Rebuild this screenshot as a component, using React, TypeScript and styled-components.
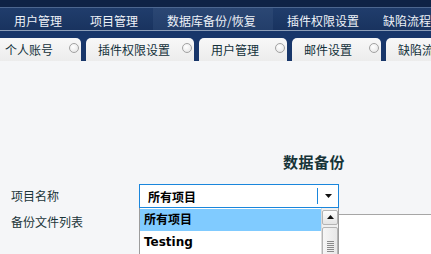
import React from "react";
import styled, { createGlobalStyle } from "styled-components";

const Global = createGlobalStyle`
  html, body {
    margin: 0;
    padding: 0;
    overflow: hidden;
    background: #f5f6f8;
    font-family: "Noto Sans CJK SC", "DejaVu Sans", sans-serif;
  }
`;

const Page = styled.div`
  width: 431px;
  height: 254px;
  overflow: hidden;
  background: #f5f6f8;
`;

const TopStrip = styled.div`
  height: 7px;
  background: #0f2346;
`;

const NavBar = styled.nav`
  height: 22px;
  display: flex;
  align-items: stretch;
  border-top: 1px solid #4d6790;
  border-bottom: 1px solid #8b9db8;
  background: linear-gradient(#203d6c, #19335f);
  white-space: nowrap;
`;

const NavItem = styled.div<{ $w: number; $active?: boolean }>`
  flex: none;
  width: ${(p) => p.$w}px;
  box-sizing: border-box;
  padding: 2px 0 0 14px;
  display: flex;
  align-items: center;
  font-size: 12px;
  color: #eef2f8;
  background: ${(p) => (p.$active ? "linear-gradient(#2b4774, #233e6a)" : "transparent")};
`;

const TabBar = styled.div`
  height: 30px;
  box-sizing: border-box;
  padding-top: 7px;
  background: #18366a;
  overflow: hidden;
`;

const TabStrip = styled.div`
  display: flex;
  gap: 5px;
  margin-left: -7px;
  white-space: nowrap;
`;

const Tab = styled.div<{ $w: number }>`
  flex: none;
  width: ${(p) => p.$w}px;
  height: 23px;
  box-sizing: border-box;
  padding-left: 12px;
  display: flex;
  align-items: center;
  border-radius: 5px 5px 0 0;
  background: linear-gradient(#f8f8f8, #ececec);
  font-size: 12px;
  color: #12303a;
`;

const CloseDot = styled.span`
  margin-left: auto;
  margin-right: 2px;
  align-self: flex-start;
  margin-top: 5px;
  width: 10px;
  height: 10px;
  box-sizing: border-box;
  border-radius: 50%;
  border: 1px solid #a2a2a2;
  background: radial-gradient(circle at 40% 35%, #ffffff, #e2e2e2);
`;

const Content = styled.main`
  padding-top: 91px;
`;

const Heading = styled.h2`
  margin: 0 0 12px 283px;
  height: 20px;
  line-height: 20px;
  font-size: 15px;
  font-weight: 700;
  letter-spacing: 0.5px;
  color: #173438;
`;

const Form = styled.div`
  display: grid;
  grid-template-columns: 139px 200px 1fr;
  row-gap: 6px;
`;

const Label = styled.div`
  padding-left: 11px;
  font-size: 12px;
  line-height: 16px;
  color: #1b3538;
  align-self: center;
`;

const TopLabel = styled(Label)`
  align-self: start;
`;

const SelectWrap = styled.div`
  position: relative;
  z-index: 2;
`;

const SelectBox = styled.div`
  height: 24px;
  box-sizing: border-box;
  border: 1px solid #1a86dc;
  background: #fff;
  display: flex;
  align-items: center;
  padding-left: 8px;
  font-size: 12px;
  font-weight: 700;
  color: #000;
`;

const SelectValue = styled.span`
  flex: 1;
`;

const Divider = styled.span`
  width: 1px;
  height: 16px;
  background: #1a86dc;
`;

const ArrowZone = styled.span`
  width: 20px;
  display: flex;
  justify-content: center;
  align-items: center;
`;

const DropList = styled.div`
  position: absolute;
  left: 0;
  top: 100%;
  width: 200px;
  height: 140px;
  box-sizing: border-box;
  border: 1px solid #9c9c9c;
  border-top: none;
  background: #fff;
  display: flex;
`;

const Options = styled.div`
  flex: 1;
  padding-top: 1px;
`;

const Option = styled.div<{ $selected?: boolean }>`
  height: 22px;
  line-height: 22px;
  padding-left: 4px;
  font-family: "DejaVu Sans", "Noto Sans CJK SC", sans-serif;
  font-size: 12px;
  font-weight: 700;
  color: #000;
  background: ${(p) => (p.$selected ? "#80cbff" : "transparent")};
`;

const ScrollBar = styled.div`
  width: 16px;
  padding: 2px 0 0 0;
  background: #f0f0f0;
  border-left: 1px solid #dcdcdc;
  display: flex;
  flex-direction: column;
  gap: 2px;
`;

const ScrollButton = styled.div`
  height: 15px;
  box-sizing: border-box;
  border: 1px solid #b4b4b4;
  border-radius: 2px;
  background: linear-gradient(#fdfdfd, #e4e4e4);
  display: flex;
  align-items: center;
  justify-content: center;
`;

const Thumb = styled.div`
  flex: 1;
  box-sizing: border-box;
  border: 1px solid #b4b4b4;
  border-radius: 2px;
  background: linear-gradient(90deg, #f6f6f6, #e8e8e8);
  display: flex;
  flex-direction: column;
  align-items: center;
  padding-top: 13px;
  gap: 1px;
`;

const Grip = styled.span`
  width: 7px;
  height: 1px;
  background: #8a8a8a;
`;

const TableArea = styled.div`
  grid-column: 2 / 4;
  height: 60px;
  border-top: 1px solid #a6a6a6;
  background: #fff;
`;

const Tri = ({ up }: { up?: boolean }) => (
  <svg width="7" height="5" viewBox="0 0 7 5">
    <polygon points={up ? "3.5,0 7,4 0,4" : "0,0 7,0 3.5,4"} fill="#111" />
  </svg>
);

export default function App() {
  const nav = [
    { t: "用户管理", w: 76 },
    { t: "项目管理", w: 77 },
    { t: "数据库备份/恢复", w: 120, active: true },
    { t: "插件权限设置", w: 96 },
    { t: "缺陷流程设置", w: 100 },
  ];
  const tabs = [
    { t: "个人账号", w: 88 },
    { t: "插件权限设置", w: 108 },
    { t: "用户管理", w: 88 },
    { t: "邮件设置", w: 89 },
    { t: "缺陷流程设置", w: 108 },
  ];
  return (
    <Page>
      <Global />
      <TopStrip />
      <NavBar>
        {nav.map((n) => (
          <NavItem key={n.t} $w={n.w} $active={n.active}>
            {n.t}
          </NavItem>
        ))}
      </NavBar>
      <TabBar>
        <TabStrip>
          {tabs.map((t) => (
            <Tab key={t.t} $w={t.w}>
              {t.t}
              <CloseDot />
            </Tab>
          ))}
        </TabStrip>
      </TabBar>
      <Content>
        <Heading>数据备份</Heading>
        <Form>
          <Label>项目名称</Label>
          <SelectWrap>
            <SelectBox>
              <SelectValue>所有项目</SelectValue>
              <Divider />
              <ArrowZone>
                <Tri />
              </ArrowZone>
            </SelectBox>
            <DropList>
              <Options>
                <Option $selected>所有项目</Option>
                <Option>Testing</Option>
              </Options>
              <ScrollBar>
                <ScrollButton>
                  <Tri up />
                </ScrollButton>
                <Thumb>
                  <Grip />
                  <Grip />
                  <Grip />
                  <Grip />
                  <Grip />
                  <Grip />
                </Thumb>
              </ScrollBar>
            </DropList>
          </SelectWrap>
          <div />
          <TopLabel>备份文件列表</TopLabel>
          <TableArea />
        </Form>
      </Content>
    </Page>
  );
}
